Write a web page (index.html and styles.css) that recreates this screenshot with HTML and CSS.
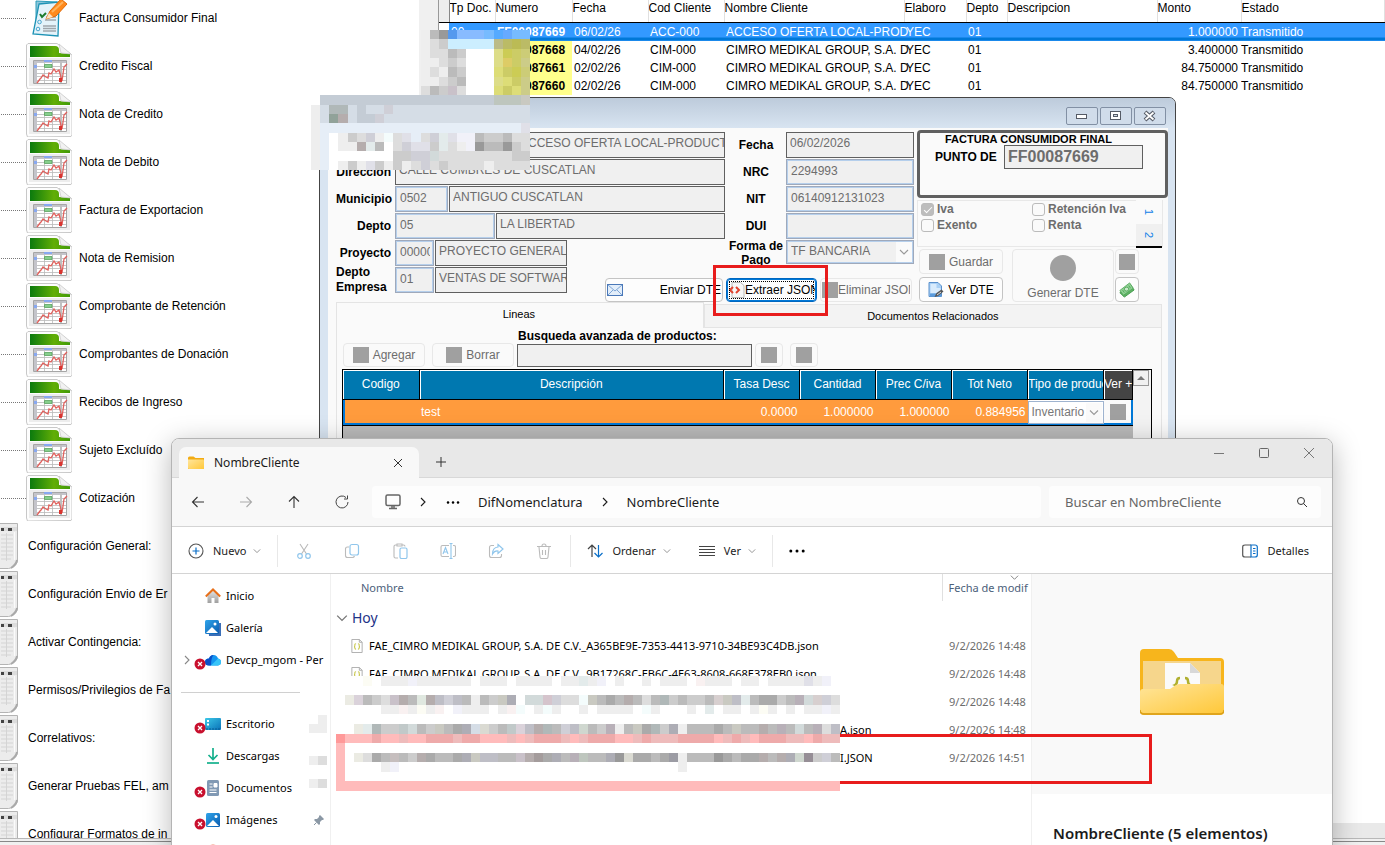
FILE: index.html
```html
<!DOCTYPE html>
<html lang="es">
<head>
<meta charset="utf-8">
<title>Facturación - NombreCliente</title>
<link rel="stylesheet" href="styles.css">
</head>
<body>
<svg class="defs" aria-hidden="true">
  <defs>
    <linearGradient id="g-green"><stop offset="0" stop-color="#0b7a0e"/><stop offset=".6" stop-color="#62ae06"/><stop offset="1" stop-color="#3f9a06"/></linearGradient>
    <linearGradient id="g-fold" x1="0" y1="0" x2="1" y2="1"><stop offset="0" stop-color="#ffe59b"/><stop offset="1" stop-color="#ffc83a"/></linearGradient>
    <linearGradient id="g-blue" x1="0" y1="0" x2="1" y2="1"><stop offset="0" stop-color="#2fa4ea"/><stop offset="1" stop-color="#0b5cb0"/></linearGradient>
    <linearGradient id="g-desk" x1="0" y1="0" x2="1" y2="1"><stop offset="0" stop-color="#3cc8e8"/><stop offset="1" stop-color="#0a72b8"/></linearGradient>
    <linearGradient id="g-gray" x1="0" y1="0" x2="0" y2="1"><stop offset="0" stop-color="#e6e6e6"/><stop offset="1" stop-color="#9f9f9f"/></linearGradient>
  </defs>
  <symbol id="i-sheet" viewBox="0 0 46 46">
    <path d="M2 .5h29L46 12v32l-1 1.500-43.500.500L.5 43V2z" fill="#fdfdfd" stroke="#c8c8c8"/>
    <path d="M3 15h41v28H3z" fill="#ededed"/>
    <path d="M4 3h25q4 0 4 4v3l11 1v3H4z" fill="url(#g-green)"/>
    <path d="M33 1l12 10-10-1z" fill="#f2f2f2" stroke="#c4c4c4" stroke-width=".7"/>
    <path d="M7.500 17.500h33v23h-33z" fill="#fff" stroke="#a6a6a6"/>
    <path d="M8 18h32v2H8zM8 18h3v22H8z" fill="#c4c4ca"/>
    <path d="M11 23.500h29M11 26.500h29M11 30.500h29M11 33.500h29M11 37.500h29M18.500 20v20M26.500 20v20" stroke="#b9b9b9" stroke-width=".8"/>
    <path d="M34 18h2v22h-2z" fill="#c0c0c0"/>
    <path d="M18 17h8v2h-8zM8 22h3v3H8z" fill="#88a8f0"/>
    <path d="M18.500 21.500h7.500v3h-7.500z" fill="#86cf8c" stroke="#4b9a50" stroke-width=".7"/>
    <path d="M11 40l3-4 1-1 2-3 3 2 2 1 1-5 2 1 3-5 2 3 3-2 3 11 2-14 3-3" fill="none" stroke="#e0605c" stroke-width="1.300"/>
    <path d="M33 35h3v4h-3z" fill="#d8342f"/>
  </symbol>
  <symbol id="i-invoice" viewBox="0 0 46 46">
    <path d="M10 6l21 1-3 20-18 5z" fill="#8cc6da" stroke="#2b9cba"/>
    <path d="M13 9l20-2-1 34-25-2z" fill="#e4f3fa" stroke="#1e93b5" stroke-width="1.300"/>
    <path d="M14 19l2 3 4-4" fill="none" stroke="#1c7a2c" stroke-width="2"/>
    <circle cx="13.500" cy="27" r="1.800" fill="none" stroke="#48a6cf"/><circle cx="12" cy="34" r="1.800" fill="none" stroke="#48a6cf"/>
    <path d="M20 22h10M19 25h11M17 31h13M17 33.500h13M17 36h13" stroke="#9fa6ac" stroke-width="1.500"/>
    <path d="M20 24l4-8L35 4l6 5-11 12z" fill="#ff8a1c" stroke="#e06a08"/>
    <path d="M20 24l3-6 4 4z" fill="#fbe3c4"/><path d="M26 17L37 7" stroke="#ffb45e" stroke-width="2"/>
  </symbol>
  <symbol id="i-server" viewBox="0 0 18 46">
    <path d="M-3 .5h20.500v38q-2 6-9 7H-3z" fill="#ececec" stroke="#b4b4b4"/>
    <path d="M11 45q5-3 6-8" fill="none" stroke="#aaa" stroke-width="2"/>
    <path d="M1 4h16v4H1z" fill="#dcdcdc"/><path d="M1 5h3v3H1zM8 5h4v3H8z" fill="#444"/>
    <path d="M1 12h12M1 16h12M1 20h12M1 24h12M1 28h12M1 32h12M1 36h10M6.500 10v28" stroke="#d4d4d4" stroke-width="1"/>
    <path d="M14.500 9v28" stroke="#fbfbfb" stroke-width="1"/>
  </symbol>
  <symbol id="i-bad" viewBox="0 0 12 12"><circle cx="6" cy="6" r="5.500" fill="#c8102e"/><path d="M4 4l4 4M8 4l-4 4" stroke="#fff" stroke-width="1.300"/></symbol>
  <symbol id="i-json" viewBox="0 0 12 15"><path d="M.5.500h8l3 3v11H.5z" fill="#fff" stroke="#aaa"/><path d="M8.500.500v3h3" fill="none" stroke="#aaa"/><path d="M5 5q-1.500 0-1.300 1.500T3 8.200q.7.200.7 1.500T5 11M7 5q1.500 0 1.300 1.500T9 8.200q-.7.200-.7 1.500T7 11" fill="none" stroke="#c3c23c" stroke-width="1.100"/></symbol>
  <symbol id="i-down" viewBox="0 0 10 10"><path d="M1 3l4 4 4-4" fill="none" stroke="currentColor" stroke-width="1.100"/></symbol>
  <symbol id="i-right" viewBox="0 0 10 10"><path d="M3 1l4 4-4 4" fill="none" stroke="currentColor" stroke-width="1.100"/></symbol>
</svg>

<div class="app">
  <main class="workspace">
    <aside class="tree">
      <ul class="tree-docs">
        <li><svg><use href="#i-invoice"/></svg><a href="#">Factura Consumidor Final</a></li>
        <li><svg><use href="#i-sheet"/></svg><a href="#">Credito Fiscal</a></li>
        <li><svg><use href="#i-sheet"/></svg><a href="#">Nota de Credito</a></li>
        <li><svg><use href="#i-sheet"/></svg><a href="#">Nota de Debito</a></li>
        <li><svg><use href="#i-sheet"/></svg><a href="#">Factura de Exportacion</a></li>
        <li><svg><use href="#i-sheet"/></svg><a href="#">Nota de Remision</a></li>
        <li><svg><use href="#i-sheet"/></svg><a href="#">Comprobante de Retención</a></li>
        <li><svg><use href="#i-sheet"/></svg><a href="#">Comprobantes de Donación</a></li>
        <li><svg><use href="#i-sheet"/></svg><a href="#">Recibos de Ingreso</a></li>
        <li><svg><use href="#i-sheet"/></svg><a href="#">Sujeto Excluído</a></li>
        <li><svg><use href="#i-sheet"/></svg><a href="#">Cotización</a></li>
      </ul>
      <ul class="tree-config">
        <li><svg><use href="#i-server"/></svg><a href="#">Configuración General:</a></li>
        <li><svg><use href="#i-server"/></svg><a href="#">Configuración Envio de Er</a></li>
        <li><svg><use href="#i-server"/></svg><a href="#">Activar Contingencia:</a></li>
        <li><svg><use href="#i-server"/></svg><a href="#">Permisos/Privilegios de Fa</a></li>
        <li><svg><use href="#i-server"/></svg><a href="#">Correlativos:</a></li>
        <li><svg><use href="#i-server"/></svg><a href="#">Generar Pruebas FEL, am</a></li>
        <li><svg><use href="#i-server"/></svg><a href="#">Configurar Formatos de in</a></li>
      </ul>
    </aside>
    <div class="splitter"></div>
    <section class="docs">
      <table class="docs-table">
        <colgroup><col class="w10"><col class="w46"><col class="w77"><col class="w76"><col class="w76"><col class="w180"><col class="w62"><col class="w41"><col class="w150"><col class="w84"><col></colgroup>
        <thead><tr><th class="mark"></th><th>Tp Doc.</th><th>Numero</th><th>Fecha</th><th>Cod Cliente</th><th>Nombre Cliente</th><th>Elaboro</th><th>Depto</th><th>Descripcion</th><th>Monto</th><th>Estado</th></tr></thead>
        <tbody>
          <tr class="selected"><td></td><td>00</td><td class="num">FF00087669</td><td>06/02/26</td><td>ACC-000</td><td>ACCESO OFERTA LOCAL-PROD</td><td>YEC</td><td>01</td><td></td><td class="amount">1.000000</td><td>Transmitido</td></tr>
          <tr><td></td><td></td><td class="num">FF00087668</td><td>04/02/26</td><td>CIM-000</td><td>CIMRO MEDIKAL GROUP, S.A. D</td><td>YEC</td><td>01</td><td></td><td class="amount">3.400000</td><td>Transmitido</td></tr>
          <tr><td></td><td></td><td class="num">FF00087661</td><td>02/02/26</td><td>CIM-000</td><td>CIMRO MEDIKAL GROUP, S.A. D</td><td>YEC</td><td>01</td><td></td><td class="amount">84.750000</td><td>Transmitido</td></tr>
          <tr><td></td><td></td><td class="num">FF00087660</td><td>02/02/26</td><td>CIM-000</td><td>CIMRO MEDIKAL GROUP, S.A. D</td><td>YEC</td><td>01</td><td></td><td class="amount">84.750000</td><td>Transmitido</td></tr>
        </tbody>
      </table>
      <div class="docs-scroll"></div>
    </section>
  </main>
  <footer class="status"></footer>
</div>

<section class="invoice">
  <header class="invoice-bar">
    <button aria-label="Minimizar"><svg viewBox="0 0 32 18"><rect x="10.500" y="7.500" width="10" height="4" fill="#fff" stroke="#555b66"/></svg></button>
    <button aria-label="Maximizar"><svg viewBox="0 0 32 18"><rect x="10.500" y="4.500" width="10" height="8" fill="#fff" stroke="#555b66"/><rect x="13.500" y="7.500" width="4" height="2" fill="#d0dae6" stroke="#555b66"/></svg></button>
    <button aria-label="Cerrar"><svg viewBox="0 0 32 18"><path d="M11 5l9 8M20 5l-9 8" stroke="#555b66" stroke-width="4"/><path d="M11.500 5.500l8 7M19.500 5.500l-8 7" stroke="#fff" stroke-width="1.800"/></svg></button>
  </header>
  <div class="invoice-body">
    <form class="form">
      <div class="fields left">
        <div class="row"><label for="cli">Cliente</label><input id="cli" class="field w120" disabled><input class="field" aria-label="Nombre del cliente" value="ACCESO OFERTA LOCAL-PRODUCTO" disabled></div>
        <div class="row"><label for="dir">Dirección</label><input id="dir" class="field" value="CALLE CUMBRES DE CUSCATLAN" disabled></div>
        <div class="row"><label for="mun">Municipio</label><input id="mun" class="field soft w53" value="0502" disabled><input class="field" aria-label="Nombre del municipio" value="ANTIGUO CUSCATLAN" disabled></div>
        <div class="row"><label for="dep">Depto</label><input id="dep" class="field soft w100" value="05" disabled><input class="field" aria-label="Nombre del departamento" value="LA LIBERTAD" disabled></div>
        <div class="row short"><label for="pro">Proyecto</label><input id="pro" class="field soft w39" value="000001" disabled><input class="field" aria-label="Nombre del proyecto" value="PROYECTO GENERAL" disabled></div>
        <div class="row short"><label for="emp" class="two">Depto<br>Empresa</label><input id="emp" class="field soft w39" value="01" disabled><input class="field" aria-label="Nombre del depto empresa" value="VENTAS DE SOFTWAR" disabled></div>
      </div>
      <div class="fields mid">
        <div class="row"><label for="fec">Fecha</label><input id="fec" class="field" value="06/02/2026" disabled></div>
        <div class="row"><label for="nrc">NRC</label><input id="nrc" class="field soft" value="2294993" disabled></div>
        <div class="row"><label for="nit">NIT</label><input id="nit" class="field soft" value="06140912131023" disabled></div>
        <div class="row"><label for="dui">DUI</label><input id="dui" class="field soft" disabled></div>
        <div class="row pay"><label for="pago">Forma de<br>Pago</label><span class="pick"><select id="pago" class="field soft" disabled><option>TF BANCARIA</option></select><svg><use href="#i-down"/></svg></span></div>
      </div>
      <div class="actions">
        <button type="button" class="btn send"><svg viewBox="0 0 16 12"><rect x=".5" y=".5" width="15" height="11" fill="#e3eefa" stroke="#4a78b8"/><path d="M1 1l7 6 7-6M1 11l5-5M15 11l-5-5" fill="none" stroke="#7fa6d6"/></svg><span>Enviar DTE</span></button>
        <div class="callout-host"><button type="button" class="btn extract"><svg viewBox="0 0 16 16"><path d="M3 .5h8.500l3.500 3V15.500H3z" fill="#f7f7f7" stroke="#bbb"/><path d="M4 5L1 8l3 3M7 5l3 3-3 3" fill="none" stroke="#e2442f" stroke-width="2"/></svg><span>Extraer JSON</span></button><div class="callout"></div></div>
        <button type="button" class="btn remove" disabled><i class="blank"></i><span>Eliminar JSON</span></button>
      </div>
      <div class="side">
        <div class="kind">
          <strong>FACTURA CONSUMIDOR FINAL</strong>
          <div class="kind-row"><label for="punto">PUNTO DE VENTA</label><input id="punto" class="field big" value="FF00087669" disabled></div>
        </div>
        <div class="taxes">
          <label><input type="checkbox" checked disabled>Iva</label><label><input type="checkbox" disabled>Retención Iva</label>
          <label><input type="checkbox" disabled>Exento</label><label><input type="checkbox" disabled>Renta</label>
          <div class="pages"><button type="button">1</button><button type="button" class="second">2</button></div>
        </div>
        <div class="commands">
          <button type="button" class="btn" disabled><i class="blank"></i>Guardar</button>
          <button type="button" class="btn tall" disabled><i class="dot"></i>Generar DTE</button>
          <button type="button" class="btn icon" aria-label="Opciones" disabled><i class="blank"></i></button>
          <button type="button" class="btn view"><svg viewBox="0 0 16 16"><path d="M1 .5h9l3.500 3.500v10.500H1z" fill="#a9d0f5" stroke="#5a90cc"/><path d="M2.500 2h6v4h4v5h-10z" fill="#d8ebfc"/><path d="M2 11.500h11v3H2z" fill="#5b9bdc"/><path d="M6.500 15l2-4 5-3.500 2 2-5.500 4.500z" fill="#555"/><path d="M9 13l4-3" stroke="#ddd"/></svg>Ver DTE</button>
          <button type="button" class="btn icon" aria-label="Pagos"><svg viewBox="0 0 18 18"><path d="M1 12L13 3l4 6-11 8z" fill="#5fb364" stroke="#3c9646"/><path d="M1 9.500L12 1l4 6-11 8z" fill="#8fd193" stroke="#55a85c"/><ellipse cx="8.500" cy="8" rx="2.500" ry="2.200" fill="#c8e8c8" stroke="#55a85c"/><path d="M4 9l2 3M11 4l2 3" stroke="#55a85c"/></svg></button>
        </div>
      </div>
    </form>
    <div class="tabs"><button class="tab on">Lineas</button><button class="tab off">Documentos Relacionados</button></div>
    <div class="panel">
      <div class="panel-tools">
        <button class="btn" disabled><i class="blank"></i>Agregar</button>
        <button class="btn" disabled><i class="blank"></i>Borrar</button>
        <div class="search"><label for="busq">Busqueda avanzada de productos:</label><input id="busq" class="field" disabled></div>
        <button class="btn sq" aria-label="Buscar" disabled><i class="blank"></i></button>
        <button class="btn sq" aria-label="Limpiar" disabled><i class="blank"></i></button>
      </div>
      <div class="lines">
        <div class="lines-main">
          <table class="lines-table">
            <colgroup><col class="w76"><col><col class="w76"><col class="w76"><col class="w76"><col class="w76"><col class="w76"><col class="w29"></colgroup>
            <thead><tr><th>Codigo</th><th>Descripción</th><th>Tasa Desc</th><th>Cantidad</th><th>Prec C/iva</th><th>Tot Neto</th><th class="cut">Tipo de produc</th><th class="cut dark">Ver +</th></tr></thead>
            <tbody><tr><td></td><td>test</td><td class="amount">0.0000</td><td class="amount">1.000000</td><td class="amount">1.000000</td><td class="amount">0.884956</td><td class="cell-pick"><span class="pick"><select aria-label="Tipo de producto" disabled><option>Inventario</option></select><svg><use href="#i-down"/></svg></span></td><td class="cell-more"><i class="blank"></i></td></tr></tbody>
          </table>
        </div>
        <div class="vscroll"><button aria-label="Subir"><svg viewBox="0 0 10 10"><path d="M1 7h8L5 3z" fill="#777"/></svg></button></div>
      </div>
    </div>
  </div>
</section>
<svg class="mosaic client-mosaic" data-mosaic="client" aria-hidden="true"></svg>

<section class="explorer">
  <header class="ex-tabs">
    <div class="ex-tab">
      <svg class="folder" viewBox="0 0 16 14"><path d="M0 2q0-1.500 1.500-1.500h4L7.500 2H16v11H0z" fill="#f2ab13"/><path d="M0 3.500h15q1 0 1 1V13H1q-1 0-1-1z" fill="url(#g-fold)"/></svg>
      <span>NombreCliente</span>
      <button aria-label="Cerrar pestaña"><svg viewBox="0 0 10 10"><path d="M1 1l8 8M9 1L1 9" stroke="#333"/></svg></button>
    </div>
    <button class="new-tab" aria-label="Nueva pestaña"><svg viewBox="0 0 12 12"><path d="M6 1v10M1 6h10" stroke="#333"/></svg></button>
    <div class="ex-caption">
      <button aria-label="Minimizar"><svg viewBox="0 0 12 12"><path d="M1 6.500h10" stroke="#777"/></svg></button>
      <button aria-label="Maximizar"><svg viewBox="0 0 12 12"><rect x="1.500" y="1.500" width="9" height="9" rx="1" fill="none" stroke="#666"/></svg></button>
      <button aria-label="Cerrar"><svg viewBox="0 0 12 12"><path d="M1 1l10 10M11 1L1 11" stroke="#777"/></svg></button>
    </div>
  </header>
  <nav class="ex-nav">
    <button aria-label="Atrás"><svg viewBox="0 0 14 14"><path d="M13 7H1.500M6.500 2l-5 5 5 5" fill="none" stroke="#333" stroke-width="1.100"/></svg></button>
    <button aria-label="Adelante"><svg viewBox="0 0 14 14"><path d="M1 7h11.500M7.500 2l5 5-5 5" fill="none" stroke="#aaa" stroke-width="1.100"/></svg></button>
    <button aria-label="Arriba"><svg viewBox="0 0 14 14"><path d="M7 13V1.500M2 6.500l5-5 5 5" fill="none" stroke="#333" stroke-width="1.100"/></svg></button>
    <button aria-label="Actualizar"><svg viewBox="0 0 14 14"><path d="M13 7a6 6 0 1 1-2-4.500M12.500.500v3.500H9" fill="none" stroke="#444"/></svg></button>
    <div class="crumbs">
      <svg class="pc" viewBox="0 0 16 16"><rect x="1" y="1" width="14" height="10.500" rx="1.500" fill="none" stroke="#666" stroke-width="1.500"/><path d="M4 14.500h8M7 12v2M9 12v2" stroke="#666" stroke-width="1.500"/></svg>
      <svg class="chev"><use href="#i-right"/></svg><a href="#" class="dots" aria-label="Más carpetas"><svg viewBox="0 0 12 4"><circle cx="2" cy="2" r="1"/><circle cx="6" cy="2" r="1"/><circle cx="10" cy="2" r="1"/></svg></a><a href="#">DifNomenclatura</a><svg class="chev"><use href="#i-right"/></svg><a href="#">NombreCliente</a>
    </div>
    <div class="ex-search"><input aria-label="Buscar" placeholder="Buscar en NombreCliente"><svg viewBox="0 0 12 12"><circle cx="5" cy="5" r="3.500" fill="none" stroke="#333"/><path d="M7.500 7.500L11 11" stroke="#333"/></svg></div>
  </nav>
  <div class="ex-tools">
    <button class="new"><svg viewBox="0 0 16 16"><circle cx="8" cy="8" r="7" fill="none" stroke="#555" stroke-width="1.100"/><path d="M8 4.500v7M4.500 8h7" stroke="#0a6fc8" stroke-width="1.200"/></svg>Nuevo<svg class="mini"><use href="#i-down"/></svg></button>
    <div class="group">
      <button aria-label="Cortar"><svg viewBox="0 0 16 16" fill="none"><path d="M4 1l6.500 10M12 1L5.500 11" stroke="#b9b9b9" stroke-width="1.100"/><circle cx="4" cy="13" r="2.300" stroke="#90c6ec" stroke-width="1.200"/><circle cx="12" cy="13" r="2.300" stroke="#90c6ec" stroke-width="1.200"/></svg></button>
      <button aria-label="Copiar"><svg viewBox="0 0 16 16" fill="none"><path d="M5 4H3.500Q1.500 4 1.500 6v6.500q0 2 2 2h5q1.500 0 2-1.500" stroke="#bbb" stroke-width="1.100"/><rect x="6" y="1.500" width="8.500" height="10.500" rx="2" stroke="#90c6ec" stroke-width="1.200"/></svg></button>
      <button aria-label="Pegar"><svg viewBox="0 0 16 16" fill="none"><path d="M6 15H3.500q-1.500 0-1.500-1.500v-10Q2 2 3.500 2H5M10 2h1.500Q13 2 13 3.500M5 1h5v2H5z" stroke="#bbb" stroke-width="1.100"/><rect x="8" y="5" width="7" height="10.500" rx="1.500" stroke="#90c6ec" stroke-width="1.200"/></svg></button>
      <button aria-label="Cambiar nombre"><svg viewBox="0 0 16 16" fill="none"><path d="M9 2.500H2.500Q1 2.500 1 4v8q0 1.500 1.500 1.500H9M13 2.500h1q1.500 0 1.500 1.500v8q0 1.500-1.500 1.500h-1" stroke="#bbb" stroke-width="1.100"/><path d="M11 .5v15M9.500.500h3M9.500 15.500h3M3 11l2.500-6.500L8 11M4 9h3" stroke="#90c6ec" stroke-width="1.100"/></svg></button>
      <button aria-label="Compartir"><svg viewBox="0 0 16 16" fill="none"><path d="M6 2.500H3.500Q1.500 2.500 1.500 4.500v8q0 2 2 2h8q2 0 2-2V11" stroke="#bbb" stroke-width="1.100"/><path d="M10 1.500l5 4.500-5 4.500V8Q6.500 7.500 4.500 11 4.500 4.500 10 4z" stroke="#90c6ec" stroke-width="1.200"/></svg></button>
      <button aria-label="Eliminar"><svg viewBox="0 0 16 16" fill="none"><path d="M1 3.500h14M6 3q0-2 2-2t2 2M3 4l1 10q0 1.500 1.500 1.500h5Q12 15.500 12 14l1-10M6.500 7v5M9.500 7v5" stroke="#bbb" stroke-width="1.100"/></svg></button>
    </div>
    <div class="group wide">
      <button><svg viewBox="0 0 16 16" fill="none"><path d="M5 14V2M1 6l4-4 4 4" stroke="#444" stroke-width="1.200"/><path d="M11.500 2v12M7.500 10l4 4 4-4" stroke="#0a6fc8" stroke-width="1.200"/></svg>Ordenar<svg class="mini"><use href="#i-down"/></svg></button>
      <button><svg viewBox="0 0 16 16"><path d="M0 3.500h16M0 6.500h16M0 9.500h16M0 12.500h16" stroke="#444"/></svg>Ver<svg class="mini"><use href="#i-down"/></svg></button>
    </div>
    <div class="group last"><button aria-label="Más"><svg viewBox="0 0 16 16"><circle cx="1.800" cy="8" r="1.500"/><circle cx="8" cy="8" r="1.500"/><circle cx="14.200" cy="8" r="1.500"/></svg></button></div>
    <button class="details-btn"><svg viewBox="0 0 16 16" fill="none"><path d="M9 2H3Q.7 2 .7 4v8q0 2 2.300 2h6" stroke="#555" stroke-width="1.200"/><path d="M9 2h4q2.300 0 2.300 2v8q0 2-2.300 2H9zM11 5.500h2.500M11 8h2.500M11 10.500h2.500" stroke="#0a6fc8" stroke-width="1.200"/></svg>Detalles</button>
  </div>
  <div class="ex-body">
    <ul class="places">
      <li><svg class="place" viewBox="0 0 16 16"><path d="M2.500 7L8 2l5.500 5v8h-4v-5h-3v5h-4z" fill="url(#g-gray)"/><path d="M.8 8.500L8 1.500l7.200 7" fill="none" stroke="#e8701a" stroke-width="2"/></svg><a href="#">Inicio</a></li>
      <li><svg class="place" viewBox="0 0 16 16"><path d="M3 3h13v13H4z" fill="#3b6fb8"/><rect width="14" height="14" rx="1.500" fill="url(#g-blue)"/><path d="M1 13l6-6 6 6z" fill="#fff"/><circle cx="10" cy="4" r="1.500" fill="#fff"/></svg><a href="#">Galería</a></li>
      <li><svg class="open"><use href="#i-right"/></svg><svg class="bad"><use href="#i-bad"/></svg><svg class="place" viewBox="0 0 16 16"><path d="M4 13.500Q0 13.500 0 10t4-3.500Q5 3 8.500 3T13 6.500q3 .5 3 3.500t-3 3.500z" fill="#1496f0"/><path d="M4 13.500Q0 13.500 0 10t4-3.500Q5 3 8.500 3 6 6 6 13.500z" fill="#0a50c8"/><path d="M6 13.500L13 6.500q3 .5 3 3.500t-3 3.500z" fill="#38c4f8"/></svg><a href="#">Devcp_mgom - Per</a></li>
      <li class="rule"></li>
      <li><svg class="bad"><use href="#i-bad"/></svg><svg class="place" viewBox="0 0 16 16"><rect y="2" width="16" height="12" rx="1" fill="url(#g-desk)"/><path d="M2 4h2v2H2zM2 7.500h2v2H2z" fill="#fff"/><path d="M1 13h14" stroke="#075a94" stroke-dasharray="2 1"/></svg><a href="#">Escritorio</a><svg class="mosaic spot" data-mosaic="spotA" aria-hidden="true"></svg></li>
      <li><svg class="place" viewBox="0 0 16 16"><path d="M8 0v11M3.500 7L8 11.500 12.500 7" fill="none" stroke="#14b08c" stroke-width="1.700"/><path d="M2 15h12" stroke="#14b08c" stroke-width="1.700"/></svg><a href="#">Descargas</a><svg class="mosaic spot" data-mosaic="spotB" aria-hidden="true"></svg></li>
      <li><svg class="bad"><use href="#i-bad"/></svg><svg class="place" viewBox="0 0 16 16"><rect x="2" width="12" height="16" rx="1.500" fill="#8199b4"/><path d="M4.500 4h3M4.500 7h3M9 3.500h3v3.500H9zM4.500 10h7M4.500 12.500h7" stroke="#fff" fill="#fff"/></svg><a href="#">Documentos</a><svg class="mosaic spot" data-mosaic="spotC" aria-hidden="true"></svg></li>
      <li><svg class="bad"><use href="#i-bad"/></svg><svg class="place" viewBox="0 0 16 16"><rect x="1" y="1" width="14" height="14" rx="1.500" fill="url(#g-blue)"/><path d="M2 14l6-6 6 6z" fill="#fff"/><circle cx="11" cy="4.500" r="1.500" fill="#fff"/></svg><a href="#">Imágenes</a><svg class="pin" viewBox="0 0 12 12"><path d="M7 1l4 4-1 1-1 0-2 2v2L6 11 1 6l1-1h2l2-2V2z" fill="#8b98a5"/><path d="M3.500 8.500L1 11" stroke="#8b98a5"/></svg></li>
      <li><svg class="place" viewBox="0 0 16 16"><circle cx="8" cy="8" r="7.500" fill="#f08060"/></svg></li>
    </ul>
    <div class="files">
      <table class="file-table">
        <colgroup><col><col class="w88"></colgroup>
        <thead><tr><th>Nombre</th><th class="when">Fecha de modif<svg class="sort"><use href="#i-down"/></svg></th></tr></thead>
        <tbody>
          <tr class="today"><td colspan="2"><svg><use href="#i-down"/></svg>Hoy</td></tr>
          <tr><td><svg><use href="#i-json"/></svg>FAE_CIMRO MEDIKAL GROUP, S.A. DE C.V._A365BE9E-7353-4413-9710-34BE93C4DB.json</td><td class="when">9/2/2026 14:48</td></tr>
          <tr><td><svg><use href="#i-json"/></svg>FAE_CIMRO MEDIKAL GROUP, S.A. DE C.V._9B17268C-EB6C-4E63-8608-668E378EB0.json</td><td class="when">9/2/2026 14:48</td></tr>
          <tr><td></td><td class="when">9/2/2026 14:48</td></tr>
          <tr><td class="tail">A.json</td><td class="when">9/2/2026 14:48</td></tr>
          <tr><td class="tail">I.JSON</td><td class="when">9/2/2026 14:51</td></tr>
        </tbody>
      </table>
    </div>
    <aside class="details">
      <div class="preview">
        <svg viewBox="0 0 84 66"><path d="M0 4q0-4 4-4h25q3 0 5 3l4 6h42q4 0 4 4v49q0 4-4 4H4q-4 0-4-4z" fill="#f7b51c"/><path d="M3 12h78v28H3z" fill="#f6d68c"/><path d="M25 14h25l10 10v26H25z" fill="#fafafa"/><path d="M50 14l10 10H50z" fill="#d8d8d8"/><path d="M40 29q-3 0-3 3t-2 4q2 1 2 6M45 29q3 0 3 3t2 4q-2 1-2 6" fill="none" stroke="#b0b030" stroke-width="2.500"/><path d="M0 43q0-3 3-3h27l6-4q2-1 4-1h41q3 0 3 3v22q0 4-4 4H4q-4 0-4-4z" fill="url(#g-fold)"/><path d="M0 61q0 4 4 4h76q4 0 4-4" fill="none" stroke="#d9a01c" stroke-width="1.500"/></svg>
      </div>
      <h2>NombreCliente (5 elementos)</h2>
    </aside>
  </div>
  <div class="file-callout"></div>
  <svg class="mosaic file-mosaic" data-mosaic="files" aria-hidden="true"></svg>
</section>
<script src="mosaic.js"></script>
</body>
</html>
```
FILE: styles.css
```css
* { box-sizing: border-box; }
html, body { height: 100%; }
body { margin: 0; overflow: hidden; position: relative; background: #fff; color: #000; font: 12px/16px "Liberation Sans", Arial, sans-serif; }
button, input, select { font: inherit; color: inherit; margin: 0; }
button { padding: 0; border: 0; background: none; display: flex; align-items: center; justify-content: center; }
a { color: inherit; text-decoration: none; }
ul { list-style: none; margin: 0; padding: 0; }
table { border-collapse: collapse; border-spacing: 0; table-layout: fixed; width: 100%; }
th, td { padding: 0; font-weight: normal; text-align: left; overflow: hidden; white-space: nowrap; }
svg { display: block; flex: none; }
.defs { position: absolute; width: 0; height: 0; }
.mosaic { position: absolute; }

.w10 { width: 10px; } .w29 { width: 29px; } .w41 { width: 41px; } .w46 { width: 46px; } .w62 { width: 62px; }
.w76 { width: 76px; } .w77 { width: 77px; } .w84 { width: 84px; } .w88 { width: 88px; } .w150 { width: 150px; } .w180 { width: 180px; }

/* main application */
.app { height: 100%; display: flex; flex-direction: column; }
.workspace { flex: 1; display: flex; min-height: 0; }
.status { height: 7px; flex: none; background: #f0f0f0; border-top: 1px solid #b8b8b8; }
.status::after { content: ""; display: block; margin-top: 2px; border-top: 1px solid #888; }
.tree { width: 419px; flex: none; overflow: hidden; }
.tree ul:first-child { margin-top: -6px; }
.tree li { height: 48px; display: flex; align-items: center; }
.tree-docs li::before { content: ""; width: 25px; margin-left: 1px; border-top: 1px dotted #777; }
.tree-docs svg { width: 46px; height: 46px; }
.tree-docs a { margin-left: 7px; }
.tree-config svg { width: 18px; height: 46px; }
.tree-config a { margin-left: 10px; }
.splitter { width: 20px; flex: none; background: #f0f0f0; border-right: 1px solid #999; }
.docs { flex: 1; min-width: 0; display: flex; flex-direction: column; justify-content: space-between; }
.docs-scroll { height: 15px; background: #e9e9e9; }
.docs-table th { height: 22px; padding: 0 0 6px; border-right: 1px solid #e0e0e0; border-bottom: 1px solid #000; }
.docs-table .mark { background: #eee; border-right: 1px solid #888; }
.docs-table td { height: 18px; padding: 0 0 0 2px; line-height: 18px; }
.docs-table td:nth-child(6) { overflow: visible; }
.docs-table td:last-child { padding-left: 0; }
.docs-table .amount { text-align: right; padding-right: 3px; }
.docs-table .num { background: #ffff8c; font-weight: bold; }
.docs-table .selected td { background: linear-gradient(#39f 14px, #0078d7 14px, #0078d7 17px, #39f 17px); color: #fff; }
.docs-table .selected td:first-child { background: #fff; }

/* invoice window */
.invoice { position: absolute; left: 319px; right: 209px; top: 97px; border: 1px solid #444; border-radius: 7px 7px 0 0; background: #d8e4f1; padding: 0 7px 8px 8px; }
.invoice-bar { height: 30px; margin: 0 -7px 0 -8px; padding: 7px 9px 2px; border-radius: 6px 6px 0 0; display: flex; align-items: center; justify-content: flex-end; gap: 2px; background: linear-gradient(#bdcbdb, #d8e4f1); }
.invoice-bar button { width: 32px; height: 18px; border: 1px solid #8290a4; border-radius: 2px; background: #d0dcea; }
.invoice-bar svg { width: 32px; height: 18px; }
.invoice-body { background: #fafafa; padding: 2px 0 0 8px; }
.form { display: grid; grid-template-columns: minmax(0, 1fr) 189px 254px; grid-template-rows: 172px; }
.fields { display: grid; grid-auto-rows: 26px; gap: 1px; padding-top: 2px; align-content: start; grid-row: 1; }
.fields.left { grid-column: 1; }
.fields.mid { grid-column: 2; }
.row { display: flex; align-items: center; gap: 1px; min-width: 0; }
.row.short { max-width: 231px; }
.row label { flex: none; font-weight: bold; text-align: right; width: 55px; margin-right: 3px; line-height: 15px; }
.mid .row label { width: 56px; text-align: center; margin: 0 1px 0 3px; line-height: 14px; }
.left .two { text-align: left; }
.field { height: 26px; min-width: 0; flex: 1; border: 1px solid #606060; border-radius: 0; background: #f0f0f0; color: #6d6d6d; padding: 0 0 4px 3px; opacity: 1; }
.field.soft { border: 1px solid #9fa9bb; box-shadow: inset 0 0 0 1px #b5cfec; padding: 0 3px 2px 4px; }
.w39 { flex: 0 0 39px; } .w53 { flex: 0 0 53px; } .w100 { flex: 0 0 100px; } .w120 { flex: 0 0 120px; }
.pick { flex: 1; display: flex; position: relative; min-width: 0; }
.pick select { appearance: none; width: 100%; }
.pay .pick { align-self: flex-start; }
.pick .field { height: 24px; }
.pick svg { position: absolute; right: 2px; top: 2px; width: 16px; height: calc(100% - 4px); padding: 3px; background: #fafafa; color: #999; }
.btn { height: 24px; border: 1px solid #c4c4c4; border-radius: 4px; background: #fdfdfd; gap: 4px; white-space: nowrap; overflow: hidden; }
.btn:disabled { border-color: #e8e8e8; background: #fafafa; color: #6d6d6d; }
.btn svg { width: 16px; height: 16px; }
.blank { width: 16px; height: 16px; background: #a0a0a0; flex: none; display: block; }
.actions { grid-column: 1 / 3; grid-row: 1; align-self: end; justify-self: end; display: flex; gap: 3px; margin-right: 2px; }
.send { width: 118px; justify-content: space-between; padding: 0 1px; }
.extract { width: 91px; border: 1px solid #0067c0; box-shadow: inset 0 0 0 1px #0078d7; justify-content: flex-start; padding: 0 1px 0 2px; gap: 0; outline: 1px dotted #000; outline-offset: -4px; }
.extract span, .remove span { overflow: hidden; }
.remove { width: 92px; justify-content: flex-start; padding: 0 1px; gap: 0; }
.callout-host { position: relative; }
.callout { position: absolute; left: -13px; right: -11px; top: -13px; bottom: -14px; border: 3px solid #e81c1c; z-index: 2; pointer-events: none; }
.side { grid-column: 3; padding-left: 3px; display: flex; flex-direction: column; gap: 2px; }
.kind { height: 69px; border: 3px solid #606060; border-radius: 4px; text-align: center; }
.kind strong { display: block; line-height: 12px; margin-right: 28px; font-size: 11px; }
.kind-row { display: flex; align-items: center; padding: 0 22px 0 15px; gap: 4px; }
.kind-row label { width: 65px; overflow: hidden; white-space: nowrap; font-weight: bold; flex: none; text-align: left; }
.field.big { height: 24px; font-size: 16px; font-weight: bold; padding: 0 3px; }
.taxes { height: 47px; margin: 0 5px 0 0; position: relative; display: grid; grid-template-columns: 111px 1fr; grid-auto-rows: 16px; border: 1px solid #e8e8e8; color: #6d6d6d; font-weight: bold; }
.taxes label { display: flex; align-items: center; gap: 3px; }
.taxes input { appearance: none; width: 13px; height: 13px; margin: 0 0 0 3px; border: 1px solid #bbb; border-radius: 3px; background: #fafafa; }
.taxes input:checked { background: #bdbdbd; display: grid; place-items: center; }
.taxes input:checked::after { content: ""; width: 7px; height: 3px; border: solid #fff; border-width: 0 0 1px 1px; rotate: -45deg; }
.pages { position: absolute; right: 0; top: -1px; width: 26px; color: #1080e8; font-weight: normal; }
.pages button { width: 26px; height: 24px; writing-mode: vertical-rl; font-size: 11px; background: #fafafa; }
.pages .second { background: #f0f0f0; border-bottom: 2px solid #000; }
.commands { display: grid; grid-template: 25px 25px / 84px 9px 102px 25px; row-gap: 3px; padding-left: 2px; }
.commands .btn { height: auto; }
.commands .tall { grid-row: 1 / 3; grid-column: 3; flex-direction: column; padding-top: 4px; }
.commands .icon { grid-column: 4; margin-left: 1px; }
.commands .view { grid-row: 2; grid-column: 1; }
.dot { width: 26px; height: 26px; border-radius: 50%; background: #a0a0a0; }
.tabs { display: flex; margin-right: 6px; font-size: 11px; }
.tab { height: 26px; border: 1px solid #e4e4e4; }
.tab.on { flex: 366; border-bottom: 0; padding: 0 2px 4px 0; }
.tab.off { flex: 459; height: 24px; margin-top: 2px; background: #f3f3f3; }
.panel { margin: 0 6px 0 0; border: 1px solid #e4e4e4; border-top: 0; padding: 0 9px 0 5px; }
.panel-tools { height: 41px; display: flex; align-items: flex-end; gap: 7px; padding: 0 0 2px 1px; }
.panel-tools .btn { width: 82px; }
.panel-tools .sq { width: 28px; }
.search { width: 235px; margin: 0 -4px; }
.search label { font-weight: bold; display: block; line-height: 14px; margin: 0 0 1px 1px; white-space: nowrap; }
.search .field { width: 100%; height: 23px; display: block; }
.lines { display: flex; border: 1px solid #000; background: #b9b9b9; min-height: 110px; align-items: flex-start; }
.lines-main { flex: 1; min-width: 0; }
.lines-table th { height: 29px; text-align: center; background: #0078b0; color: #fff; border: 1px solid #000; border-top: 0; box-shadow: inset 1px 1px #fff; }
.lines-table th:first-child { border-left: 0; }
.lines-table .cut { text-align: left; }
.lines-table .dark { background: #444; }
.lines-table td { height: 26px; color: #fff; background: #ff9b3d; border-bottom: 1px solid #000; box-shadow: inset 0 -2px #0078d7; padding: 0 2px 1px; }
.lines-table td:first-child { box-shadow: inset 2px -2px #0078d7; }
.lines-table .amount { text-align: right; }
.lines-table .cell-pick { padding: 0; background: #fff; }
.cell-pick select { border: 1px solid #9fb4d0; height: 23px; padding: 0 18px 0 3px; background: #fff; color: #777; opacity: 1; }
.lines-table .cell-more { background: #fafafa; box-shadow: inset -2px -2px #0078d7; padding-left: 6px; }
.vscroll { width: 18px; align-self: stretch; background: #f3f3f3; }
.vscroll button { width: 16px; height: 16px; background: #f0f0f0; border: 1px solid #999; }
.vscroll svg { width: 10px; }
.client-mosaic { left: 311px; top: 30px; width: 219px; height: 140px; }

/* file explorer window */
.explorer { position: absolute; left: 171px; right: 52px; top: 438px; bottom: -8px; border: 1px solid #b4b4b4; border-radius: 8px 8px 0 0; background: #fff; box-shadow: 0 6px 28px rgba(0, 0, 0, .28); font-family: "Noto Sans", "Open Sans", sans-serif; color: #1b1b1b; display: flex; flex-direction: column; }
.ex-tabs { height: 39px; flex: none; background: #e8e8e8; border-bottom: 1px solid #d8d8d8; border-radius: 7px 7px 0 0; display: flex; align-items: flex-end; padding-left: 7px; }
.ex-tab { width: 240px; height: 31px; margin-bottom: -1px; background: #f8f8f8; border-radius: 7px 7px 0 0; display: flex; align-items: center; gap: 10px; padding: 0 16px 0 9px; }
.ex-tab span { flex: 1; }
.folder { width: 16px; height: 14px; }
.ex-tab button svg { width: 10px; height: 10px; }
.new-tab { width: 44px; height: 30px; }
.new-tab svg { width: 12px; }
.ex-caption { margin: 0 1px 0 auto; align-self: flex-start; display: flex; }
.ex-caption button { width: 45px; height: 28px; }
.ex-caption svg { width: 12px; }
.ex-nav { height: 49px; flex: none; background: #f8f8f8; border-bottom: 1px solid #d4d4d4; display: flex; align-items: center; padding: 0 11px 0 2px; font-size: 13px; }
.ex-nav > button { width: 48px; height: 32px; }
.ex-nav > button svg { width: 14px; }
.crumbs { flex: 1; height: 32px; margin: 0 8px 0 6px; background: #fdfdfd; border-radius: 4px; display: flex; align-items: center; padding-left: 13px; gap: 17px; }
.crumbs .pc { width: 16px; }
.crumbs .chev { width: 10px; height: 10px; }
.crumbs .dots { width: 16px; }
.crumbs .dots svg { width: 16px; height: 5px; }
.ex-search { width: 272px; height: 32px; background: #fdfdfd; border-radius: 4px; display: flex; align-items: center; padding: 0 13px 0 16px; }
.ex-search input { flex: 1; min-width: 0; border: 0; padding: 0; background: none; }
.ex-search input::placeholder { color: #666; opacity: 1; }
.ex-search svg { width: 12px; }
.ex-tools { height: 47px; flex: none; border-bottom: 1px solid #d4d4d4; display: flex; align-items: center; padding: 2px 23px 0 16px; font-size: 11px; }
.ex-tools button { gap: 9px; }
.ex-tools button svg { width: 16px; height: 16px; }
.ex-tools .mini { width: 8px; height: 8px; color: #888; margin-left: -2px; }
.ex-tools .new { margin-right: 16px; }
.group { display: flex; align-items: center; height: 32px; border-left: 1px solid #e8e8e8; padding: 0 18px; gap: 32px; }
.group.wide { padding: 0 16px; gap: 28px; }
.group.last { padding-left: 16px; }
.details-btn { margin-left: auto; }
.ex-body { flex: 1; min-height: 0; display: flex; overflow: hidden; font-size: 11px; }
.places { width: 158px; flex: none; padding-top: 6px; }
.places li { height: 32px; display: flex; align-items: center; padding-left: 33px; position: relative; white-space: nowrap; }
.places a { margin-left: 5px; color: #000; }
.places .place { width: 16px; height: 16px; }
.places .bad { position: absolute; left: 22px; top: 14px; width: 12px; height: 12px; }
.places .open { position: absolute; left: 10px; top: 11px; width: 10px; height: 10px; color: #888; }
.places .rule::before { content: ""; width: 119px; margin-left: -24px; border-top: 1px solid #d0d0d0; }
.places .spot { left: 137px; top: 7px; width: 18px; height: 18px; }
.places .pin { position: absolute; right: 5px; top: 10px; width: 12px; height: 12px; }
.files { flex: 1; min-width: 0; border-left: 1px solid #f0f0f0; padding-right: 1px; }
.file-table th { height: 27px; padding-left: 30px; color: #4c607a; }
.file-table th.when { padding-left: 6px; position: relative; border-left: 1px solid #e0e0e0; }
.sort { position: absolute; right: 11px; top: -1px; width: 9px; height: 9px; color: #888; }
.file-table td { height: 28px; padding-left: 38px; color: #000; position: relative; }
.file-table td svg { position: absolute; left: 20px; top: 7px; width: 12px; height: 14px; }
.file-table td.when { padding-left: 7px; color: #6d6d6d; }
.file-table .today td { height: 31px; padding: 2px 0 0 21px; font-size: 14px; color: #1e3287; }
.file-table .today svg { left: 5px; top: 11px; width: 12px; height: 12px; color: #777; }
.file-table .tail { padding-left: 509px; }
.details { width: 301px; flex: none; border-left: 1px solid #f0f0f0; }
.preview { height: 220px; background: #f9f9f9; display: grid; place-items: center; padding-bottom: 4px; }
.preview svg { width: 84px; height: 66px; }
.details h2 { margin: 29px 0 0 21px; font-size: 15px; line-height: 20px; font-weight: 600; white-space: nowrap; }
.file-callout { position: absolute; left: 166px; right: 180px; top: 295px; height: 50px; border: 3px solid #e81c1c; }
.file-mosaic { left: 164px; top: 237px; width: 504px; height: 115px; }
```
FILE: mosaic.js
```js
// Each row lists cells as three-digit hex colours; "*n" repeats a cell and "." leaves it clear.
const mosaics = {
  client: [
    ".*12 eee bbb 999 59e 8bf*3 7bf 5af 6af 7bf*2",
    ".*12 eee ddd ccc cef*5 bb8 bb6 bb5 bb6",
    ".*12 eee ddd ddd bbb ccc fff*3 dd8 cc5 cc6 cc7",
    ".*12 eee eee ddd ccc ddd fff*3 dd8 dc6 cc6 cc8",
    ".*12 eee ddd eee bbb ccc fff*3 dd7 cc6 cc5 cc7",
    ".*12 eee eee ddd ccc bbb fff*3 dd8 dd7 cc6 cc8",
    ".*12 ddd bbb ccc cbc ddd fff*3 dd7 cc6 dd7 cc8",
    "fff bcd*11 bcd*8 bcb*3 ccb",
    "eee cde abb*2 cde bcd cde*2 ccd cde*15",
    "eee cde 8a9 baa cde bcd*2 ccd cde*16",
    "eee def def*21 dde",
    "eee def fff eee ccc ddd ccd eee eff ddd dde def ddd ccd dee dde eef eef bbb ccc ccc bbb ddd ddd",
    "eee def fff eee eee baa dee bbb fff ddd ccd dde dde ccc dee ddd eee eef 999 bbb bbb 999 ccc ddd",
    "eee def fff*7 ccc*2 ccd ccd cdd ddd*8 ccc*2",
    "eee def fff eee ccc eee dde ccc eee ccc eee ddd ccd ddd ccc ddd*4 eee ddd*4"
  ],
  files: [
    "fff*3 ffe fff eee*3 eef eee*3 eee eee*2 fff eee*3 fff eee*4 fff eee*2 dee eee eef fff eee fff fff eee fff eee eee eee fff fee eee*3 fff eee*2 fff eee*4 dde eee eef .",
    "fff*56",
    "fff eed dcd bbb ccc ddd cbc baa bbb ded baa bbc ccd bbc bbb eee bbb ccc ccb aab fff cdd cdd dbc ccd ddd ddd eff ccb bbb aaa bbb baa bbb ddd bbb abb ccc bbb ccc ccc bbb dcc ccb bbc dee bbb aaa aaa ccc bbb bab cdd dcc ccd ddd",
    "fff*4 fff eee eee fee eee ffe eee fee fff eef eee*3 fff eee fee eff fff eee eff eee fff*2 eee fff eee*4 fff eff eee fff*3 eee fff dee fff eee*2 fff eee ffe eee fff eee fff eee*2 eef eee",
    "fff*56",
    "fff fff eed dee abb ccc ccc bcc cdd bbb ccc ccb bbb aaa aab cde ddc ccc bbb bcc dcd bbc baa abb bbb ccd bbc cdc bbb ccc bab eee bbb ccb aaa abb ccc aab eee bbb bbb bbb aaa bbb ccb bbb bbb baa bbb bab bbb cdd bbb bab ddd bbc",
    "f99 fbb*3 eaa fbb*2 ebb fbb*2 eaa*3 ebb eaa*2 fbb*3 ebb fbb ebb eaa eaa eaa ebb fbb ebb eaa*3 fbb*2 ebb eaa ebb*3 eaa*4 fbb ebb eaa ebb fbb eaa*3 ebb*2 fbb eaa ebb ebb",
    "fbb fff*55",
    "fbb fff eed ddd aaa bbb cbb bbb ccc baa aaa bbb bbb aaa aab ccb bbc bbc bbb bbb cbc baa a99 aaa aab bbb bab bcb bbb bbb aab 999 ddc aaa aaa bbb aaa 99a eee bbb bbb bbb 999 aaa bbb aaa aaa baa bbb baa aab cdc 989 ccc ccd bbb",
    "fbb fff*3 fff eee eef fff*31 eee fff*17",
    "fbb fff*55",
    "fbb*56"
  ],
  spotA: ["fff eee", "eee eee"],
  spotB: ["fff fff", "eee ddd"],
  spotC: ["eee ddd", "fff fff"]
};

// Pale tints are drawn at half strength; strong ones keep their full colour.
function tint(hex) {
  const channels = [...hex].map((digit) => parseInt(digit, 16) * 17);
  const spread = Math.max(...channels) - Math.min(...channels);
  const mean = (channels[0] + channels[1] + channels[2]) / 3;
  const mixed = spread > 40 ? channels : channels.map((value) => Math.round((value + mean) / 2));
  return `rgb(${mixed.join(",")})`;
}

document.querySelectorAll("[data-mosaic]").forEach((svg) => {
  const rows = mosaics[svg.dataset.mosaic].map((row) =>
    row.split(" ").flatMap((token) => {
      const [color, count] = token.split("*");
      return Array(Number(count || 1)).fill(color);
    })
  );
  const columns = Math.max(...rows.map((row) => row.length));
  svg.setAttribute("viewBox", `0 0 ${columns} ${rows.length}`);
  svg.setAttribute("preserveAspectRatio", "none");
  svg.setAttribute("shape-rendering", "crispEdges");
  rows.forEach((row, y) => row.forEach((color, x) => {
    if (color === ".") return;
    const cell = document.createElementNS("http://www.w3.org/2000/svg", "rect");
    cell.setAttribute("x", x);
    cell.setAttribute("y", y);
    cell.setAttribute("width", 1);
    cell.setAttribute("height", 1);
    cell.setAttribute("fill", tint(color));
    svg.append(cell);
  }));
});
```
